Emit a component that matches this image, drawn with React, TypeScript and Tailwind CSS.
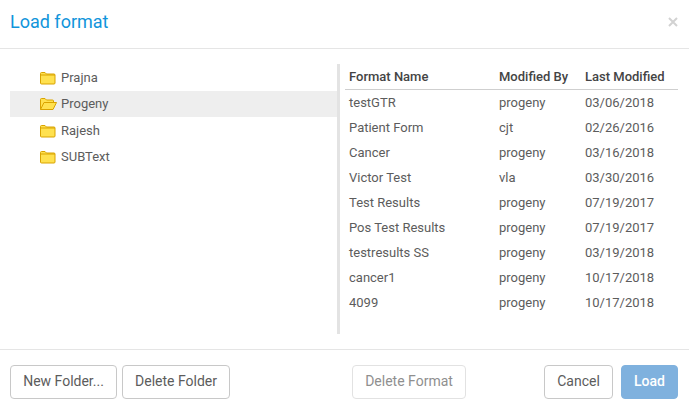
const folders = ["Prajna", "Progeny", "Rajesh", "SUBText"];

const formats = [
  ["testGTR", "progeny", "03/06/2018"],
  ["Patient Form", "cjt", "02/26/2016"],
  ["Cancer", "progeny", "03/16/2018"],
  ["Victor Test", "vla", "03/30/2016"],
  ["Test Results", "progeny", "07/19/2017"],
  ["Pos Test Results", "progeny", "07/19/2017"],
  ["testresults SS", "progeny", "03/19/2018"],
  ["cancer1", "progeny", "10/17/2018"],
  ["4099", "progeny", "10/17/2018"],
];

const FolderIcon = ({ open }: { open: boolean }) =>
  open ? (
    <svg width="17" height="14" viewBox="0 0 17 14" className="shrink-0">
      <path d="M0.5 12.5V2.5a1 1 0 0 1 1-1h3.5l1.5 1.5h6a1 1 0 0 1 1 1v1.5" fill="#ffe14f" stroke="#d9a300" strokeWidth="1" />
      <path d="M0.5 12.5L4 5.5h12.5l-3.5 7z" fill="#ffe14f" stroke="#d9a300" strokeWidth="1" strokeLinejoin="round" />
    </svg>
  ) : (
    <svg width="17" height="14" viewBox="0 0 17 14" className="shrink-0">
      <path d="M0.5 12V2.5a1 1 0 0 1 1-1h3.5L6.5 3h7.5a1 1 0 0 1 1 1v8a1 1 0 0 1-1 1H1.5a1 1 0 0 1-1-1z" fill="#ffe14f" stroke="#d9a300" strokeWidth="1" />
      <path d="M0.5 4h14.5" stroke="#d9a300" strokeWidth="1" />
    </svg>
  );

const Btn = ({ children, className }: { children: React.ReactNode; className: string }) => (
  <button className={`h-[34px] rounded-[4px] border text-[14px] pb-px ${className}`}>{children}</button>
);

export default function App() {
  return (
    <div className="w-[689px] h-[407px] bg-white flex flex-col overflow-hidden text-[13px] text-[#5c5c5c] font-['Roboto',sans-serif]">
      <div className="h-[49px] shrink-0 border-b border-[#e5e5e5] flex items-center justify-between pl-[10px] pr-[11px]">
        <h1 className="text-[18px] text-[#1195db] -mt-[6px]">Load format</h1>
        <svg width="10" height="10" viewBox="0 0 10 10" className="-mt-[5px]">
          <path d="M1 1l8 8M9 1l-8 8" stroke="#d2d2d2" strokeWidth="2" />
        </svg>
      </div>
      <div className="h-[300px] shrink-0 flex pt-[15px] pb-[15px] pl-[10px] pr-[11px]">
        <div className="w-[327px]">
          {folders.map((name, i) => (
            <div
              key={name}
              className={`flex items-center gap-[4px] pl-[30px] ${i % 2 === 0 ? "h-[27px]" : "h-[26px]"} ${name === "Progeny" ? "bg-[#eeeeee]" : ""}`}
            >
              <FolderIcon open={name === "Progeny"} />
              <span>{name}</span>
            </div>
          ))}
        </div>
        <div className="w-[3px] bg-[#e3e3e3] shrink-0" />
        <div className="ml-[5px] flex-1">
          <div className="h-[26px] flex items-center border-b border-[#cfcfcf] pl-[4px] font-medium text-[#444]">
            <span className="w-[150px]">Format Name</span>
            <span className="w-[86px]">Modified By</span>
            <span>Last Modified</span>
          </div>
          {formats.map(([name, by, date]) => (
            <div key={name} className="h-[25px] flex items-center pl-[4px]">
              <span className="w-[150px]">{name}</span>
              <span className="w-[86px]">{by}</span>
              <span>{date}</span>
            </div>
          ))}
        </div>
      </div>
      <div className="flex-1 border-t border-[#e5e5e5] flex items-start pt-[15px] pl-[10px] pr-[11px]">
        <Btn className="w-[107px] border-[#c8c8c8] bg-white text-[#5c5c5c]">New Folder...</Btn>
        <Btn className="w-[108px] ml-[5px] border-[#c8c8c8] bg-white text-[#5c5c5c]">Delete Folder</Btn>
        <Btn className="w-[114px] ml-[122px] border-[#e2e2e2] bg-white text-[#8f8f8f]">Delete Format</Btn>
        <Btn className="w-[69px] ml-auto border-[#c8c8c8] bg-white text-[#5c5c5c]">Cancel</Btn>
        <Btn className="w-[57px] ml-[8px] border-[#7fb1de] bg-[#7fb1de] text-white font-medium">Load</Btn>
      </div>
    </div>
  );
}
